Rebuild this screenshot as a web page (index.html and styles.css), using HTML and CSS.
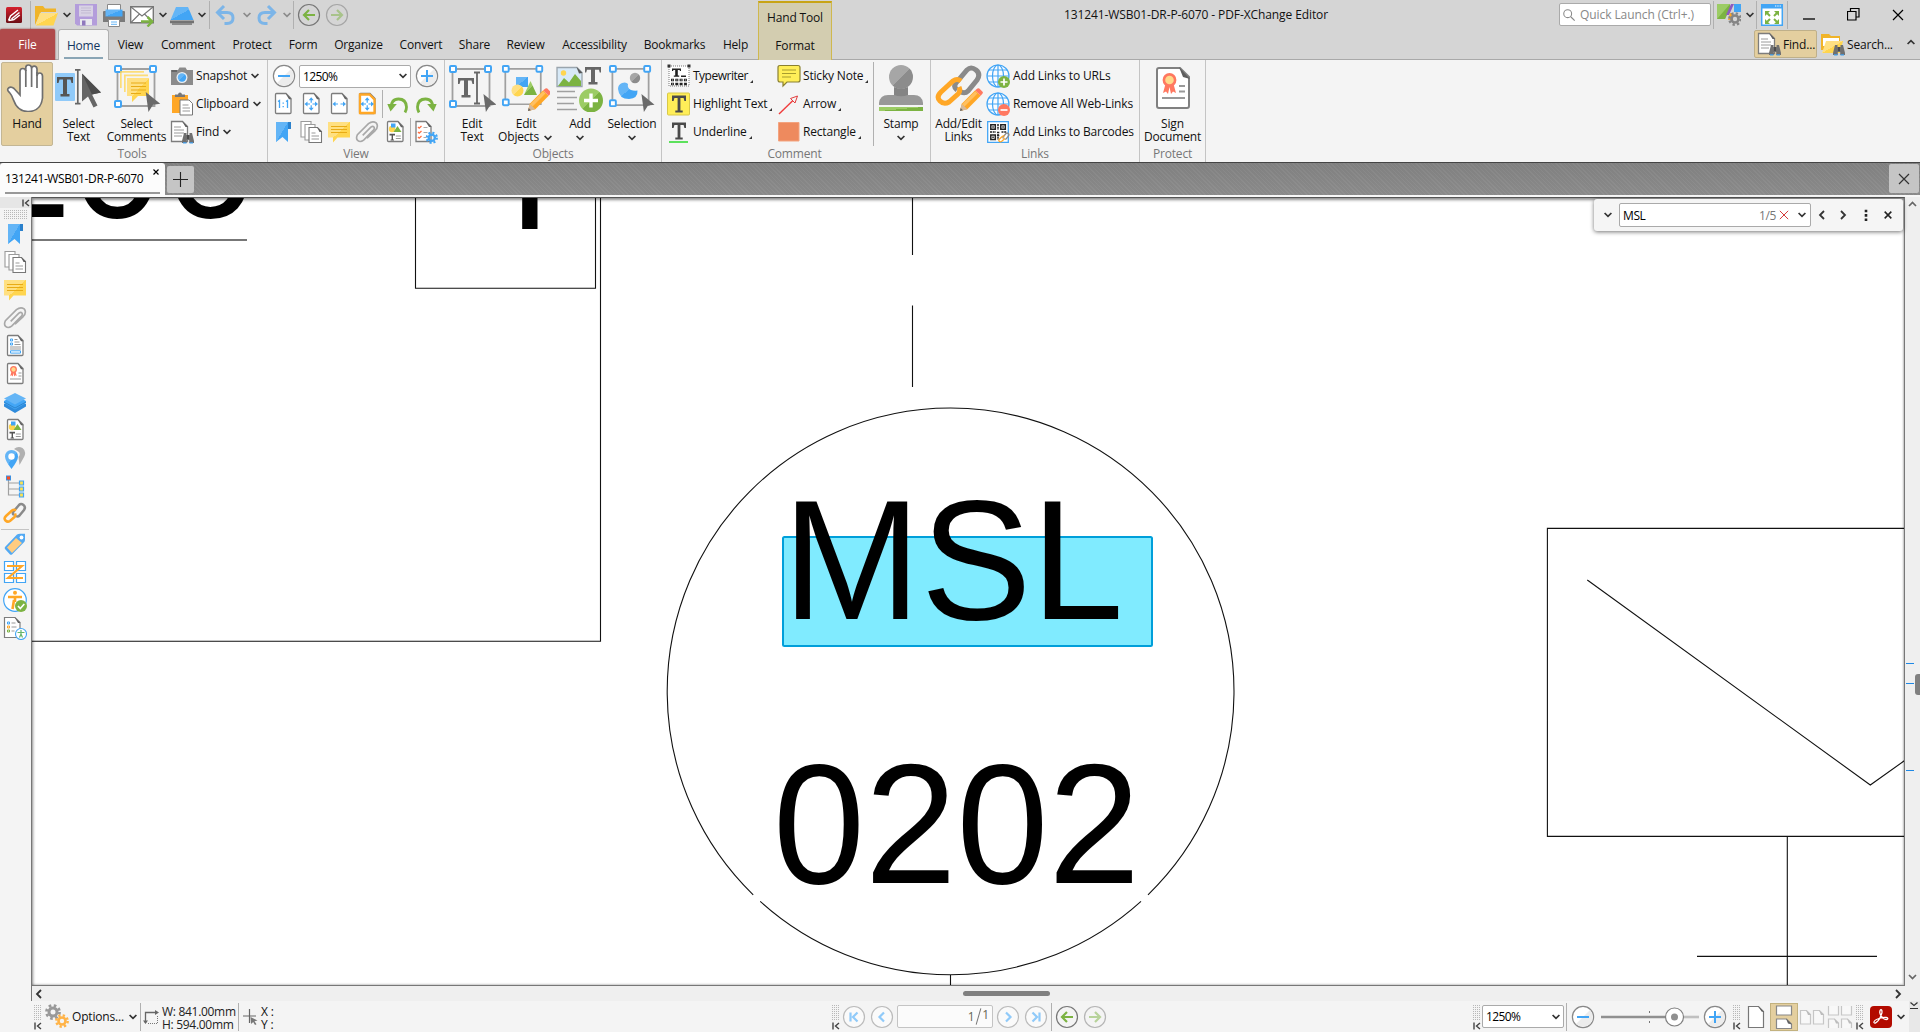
FILE: index.html
```html
<!DOCTYPE html>
<html lang="en">
<head>
<meta charset="utf-8">
<title>131241-WSB01-DR-P-6070 - PDF-XChange Editor</title>
<link rel="stylesheet" href="styles.css">
</head>
<body>
<svg class="defs" width="0" height="0" aria-hidden="true">
  <defs>
    <linearGradient id="gBlue" x1="0" y1="0" x2="1" y2="1"><stop offset=".5" stop-color="#64b5f6"/><stop offset=".5" stop-color="#42a5f5"/></linearGradient>
    <linearGradient id="gYellow" x1="0" y1="0" x2="1" y2="1"><stop offset=".5" stop-color="#ffe082"/><stop offset=".5" stop-color="#ffd54f"/></linearGradient>
    <linearGradient id="gGreen" x1="0" y1="0" x2="1" y2="1"><stop offset=".5" stop-color="#9ccc65"/><stop offset=".5" stop-color="#7cb342"/></linearGradient>
    <linearGradient id="gGray" x1="0" y1="0" x2="1" y2="1"><stop offset=".5" stop-color="#a6a6a6"/><stop offset=".5" stop-color="#8c8c8c"/></linearGradient>
    <linearGradient id="gRed" x1="0" y1="0" x2="0" y2="1"><stop offset="0" stop-color="#d5202c"/><stop offset="1" stop-color="#6c0d15"/></linearGradient>
  </defs>
  <symbol id="chev" viewBox="0 0 12 12"><path d="M2.600 4l3.400 3.400L9.400 4" fill="none" stroke="currentColor" stroke-width="1.700"/></symbol>
  <symbol id="chevL" viewBox="0 0 12 12"><path d="M8 2L4 6l4 4" fill="none" stroke="currentColor" stroke-width="1.800"/></symbol>
  <symbol id="chevR" viewBox="0 0 12 12"><path d="M4 2l4 4-4 4" fill="none" stroke="currentColor" stroke-width="1.800"/></symbol>
  <symbol id="cross" viewBox="0 0 12 12"><path d="M1 1l10 10M11 1L1 11" fill="none" stroke="currentColor" stroke-width="1.200"/></symbol>
  <symbol id="crossB" viewBox="0 0 12 12"><path d="M1 1l10 10M11 1L1 11" fill="none" stroke="currentColor" stroke-width="2.300"/></symbol>
  <symbol id="collapse" viewBox="0 0 8 8"><path d="M1 .5v7M7 1L3.500 4 7 7" fill="none" stroke="#444" stroke-width="1.400"/></symbol>
  <symbol id="page" viewBox="0 0 24 24"><path d="M4.500 2.500q0-1 1-1H15l5 5v14q0 1-1 1H5.500q-1 0-1-1z" fill="#fff" stroke="#7d7d7d" stroke-width="1.300"/><path d="M14.500 1.200l6 6h-2.500z" fill="#5d5d5d"/></symbol>
  <symbol id="binoc" viewBox="0 0 12 12"><path d="M2 1h2.500v2h3V1H10l2 8v2H7.200V8H4.800v3H0V9z" fill="#707070"/><path d="M1 10.200h3.500v1.300H1zM7.500 10.200H11v1.300H7.500z" fill="#3f9ff0"/><path d="M5 3h2v4H5z" fill="#4b4b4b"/></symbol>
  <symbol id="logo" viewBox="0 0 16 16"><rect width="16" height="16" rx="1.500" fill="url(#gRed)"/><path d="M2.500 13.500l2-4.500L12 3M5.500 12L13.500 5.500M7.500 13L13.800 8M2.500 13.500l5-.8" fill="none" stroke="#fff" stroke-width="1.500"/></symbol>
  <symbol id="folder" viewBox="0 0 24 24"><path d="M0 3h8l2 2.500h11V9H6L0 22z" fill="#f0b429"/><path d="M5 10h18l-4.500 12.500H.5z" fill="url(#gYellow)"/></symbol>
  <symbol id="save" viewBox="0 0 24 24"><path d="M0 1h22v21.500H2L0 20.500z" fill="#b39ddb"/><path d="M4 2.500h14v11H4z" fill="#d8d2e4"/><path d="M6 5h10M6 7.500h10M6 10h10" stroke="#c3bbd3"/><path d="M5 16h12v6H5z" fill="#e8e8ee"/><path d="M7 17.500h3.500v5H7z" fill="#8f78bd"/></symbol>
  <symbol id="printer" viewBox="0 0 24 24"><path d="M5.500 1.500h13v6h-13z" fill="#fff" stroke="#888"/><path d="M1 9q0-1 1-1h20q1 0 1 1v10H1z" fill="#7b7b7b"/><path d="M3.500 6.500h17v7h-17z" fill="url(#gBlue)"/><path d="M6.500 16.500h11v7h-11z" fill="#fff" stroke="#888"/><path d="M9 19h6M9 21.300h6" stroke="#64b5f6"/></symbol>
  <symbol id="mail" viewBox="0 0 24 24"><path d="M.7 3.700h22.600v16H.7z" fill="#fff" stroke="#777" stroke-width="1.400"/><path d="M1 4l11 9L23 4M1 19.500l8.500-8.500M23 19.500L14.500 11" fill="none" stroke="#777" stroke-width="1.100"/><path d="M11 18.500h10M17.500 14l4.800 4.500-4.800 5" fill="none" stroke="#7cb342" stroke-width="2.400"/></symbol>
  <symbol id="scanner" viewBox="0 0 24 24"><path d="M6 4h12l5.500 13H.5z" fill="url(#gBlue)"/><path d="M0 17.500h24v2.800H0zM2 20.500h20v1.200H2z" fill="#737373"/></symbol>
  <symbol id="undo" viewBox="0 0 24 24"><path d="M4 9.500h9q6 0 6 5.500t-6 5.500h-2.500" fill="none" stroke="#7cb5e8" stroke-width="3"/><path d="M10 3L3.500 9.500 10 16" fill="none" stroke="#7cb5e8" stroke-width="3"/></symbol>
  <symbol id="circ" viewBox="0 0 24 24"><circle cx="12" cy="12" r="10.500" fill="#fcfcfc" fill-opacity=".7" stroke="currentColor" stroke-width="1.200"/></symbol>
  <symbol id="back" viewBox="0 0 24 24"><circle cx="12" cy="12" r="10.500" fill="none" stroke="#777" stroke-width="1.200"/><path d="M18 12H7.500M12 7l-5 5 5 5" fill="none" stroke="#7cb342" stroke-width="2.200"/></symbol>
  <symbol id="hand" viewBox="0 0 48 48"><path d="M17 31L11 24.500Q8 22 5.500 24q-2 2 1 4.500 2 2 4 7.500 4 11.500 14.500 11.500Q38 47.500 39.500 34V12q-.3-3-2.700-3-2.600 0-2.800 3V5q-.3-2.800-2.700-2.800-2.600 0-2.800 2.800V3.500Q28 1 25.500 1 22.800 1 22.800 3.500V7q-.3-2.500-3-2.500Q17 4.500 17 7.500z" fill="#fff" stroke="#6f6f6f" stroke-width="1.700"/><path d="M22.800 6v17M28.600 5v18M34 8v16" stroke="#6f6f6f" stroke-width="1.700"/></symbol>
  <symbol id="cursor" viewBox="0 0 20 35"><path d="M0 0l19 19-9 2 5.500 11-4 2L6 23l-6 5z" fill="#666"/><path d="M0 0l19 19-9 2z" fill="#4d4d4d"/></symbol>
  <symbol id="selText" viewBox="0 0 48 48"><rect x="0" y="9" width="20" height="28" rx="1" fill="#90caf9"/><path d="M2 13h16v6h-1.500l-1-3.500H12V30h2.500v2.500h-9V30H8V15.500H4.500l-1 3.500H2z" fill="#555"/><path d="M20 5.800h5.500M20 39.700h5.500M22.800 6v33.500" fill="none" stroke="#666" stroke-width="1.700"/><use href="#cursor" x="27" y="9.500" width="20" height="35"/></symbol>
  <symbol id="nodes" viewBox="0 0 48 48"><path d="M4.500 5h37v37h-37z" fill="none" stroke="#a0a0a0" stroke-width="1.800"/><g fill="#fff" stroke="#42a5f5" stroke-width="2"><rect x="2" y="2" width="6" height="6" rx="1"/><rect x="37" y="2" width="6" height="6" rx="1"/><rect x="2" y="37" width="6" height="6" rx="1"/></g></symbol>
  <symbol id="pointer" viewBox="0 0 18 22"><path d="M1 0l16 13-8 1-5 8z" fill="#6a6a6a"/></symbol>
  <symbol id="note" viewBox="0 0 24 24"><path d="M1 2h22v15.500H10.500L6 22.500v-5H1z" fill="url(#gYellow)"/><path d="M4 6.500h16M4 9.500h16M4 12.500h16" stroke="#e8ab16" stroke-width="1.100"/></symbol>
  <symbol id="selComm" viewBox="0 0 48 48"><use href="#nodes" width="48" height="48"/><g fill="#ffd54f" opacity=".75"><path d="M7 7h24v1.700H8.700V24H7zM11 10.500h24v1.700H12.700V28H11z"/></g><path d="M14 14h22v18H25l-6 6v-6h-5z" fill="url(#gYellow)"/><path d="M18 19h15M18 22.500h15M18 26h15M18 29.500h10" stroke="#e8ab16"/><use href="#pointer" x="31" y="28" width="18" height="20"/></symbol>
  <symbol id="camera" viewBox="0 0 24 24"><path d="M1 6h7l1.500-2.500h6L17 6h6v15H1z" fill="#8b8b8b"/><path d="M1.500 6H7v2H1.500z" fill="#666"/><circle cx="12" cy="13.500" r="5.500" fill="#e9eef3"/><circle cx="12" cy="13.500" r="4.200" fill="url(#gBlue)"/></symbol>
  <symbol id="clip" viewBox="0 0 24 24"><path d="M2 3h16v18H2z" fill="#ffa726"/><path d="M5 5V2.500h3q.3-2 2-2t2 2h3V5z" fill="#777"/><path d="M10 8h9l3.500 3.500V23H10z" fill="#fff" stroke="#777"/><path d="M12.500 13h6M12.500 16h7.500M12.500 19h7.500" stroke="#999"/></symbol>
  <symbol id="find" viewBox="0 0 24 24"><path d="M1.500 1.500h11l5 5v15h-16z" fill="#fff" stroke="#7d7d7d" stroke-width="1.300"/><path d="M12 1l6 6h-2.500z" fill="#5d5d5d"/><path d="M4 7h7M4 10h10M4 13h10M4 16h8" stroke="#9a9a9a"/><use href="#binoc" x="12" y="12" width="12" height="12"/></symbol>
  <symbol id="zout" viewBox="0 0 24 24"><circle cx="12" cy="12" r="10.600" fill="#fff" stroke="#888" stroke-width="1.200"/><path d="M19 5A9.900 9.900 0 0 1 5 19z" fill="#ececec"/><path d="M6 12h12" stroke="#42a5f5" stroke-width="2"/></symbol>
  <symbol id="zin" viewBox="0 0 24 24"><use href="#zout"/><path d="M12 6v12M6 12h12" stroke="#42a5f5" stroke-width="2"/></symbol>
  <symbol id="p11" viewBox="0 0 24 24"><use href="#page"/><path d="M7 9.500l1.500-1V16M15 9.500l1.500-1V16M12.200 10.500v1.200M12.200 14v1.200" fill="none" stroke="#42a5f5" stroke-width="1.300"/></symbol>
  <symbol id="arrH" viewBox="0 0 24 24"><path d="M7 12h4M13.500 12h4" stroke="#42a5f5" stroke-width="1.200"/><path d="M5.500 12l3-2.500v5zM19 12l-3-2.500v5z" fill="#42a5f5"/></symbol>
  <symbol id="fitW" viewBox="0 0 24 24"><use href="#page"/><use href="#arrH"/></symbol>
  <symbol id="arr4" viewBox="0 0 24 24"><use href="#arrH"/><use href="#arrH" transform="rotate(90 12.200 12)"/></symbol>
  <symbol id="fitP" viewBox="0 0 24 24"><use href="#page"/><use href="#arr4"/></symbol>
  <symbol id="fitV" viewBox="0 0 24 24"><use href="#page"/><path d="M5 2.500h9.500l5 5V21H5z" fill="none" stroke="#ffa726" stroke-width="2.300"/><use href="#arr4"/></symbol>
  <symbol id="rotL" viewBox="0 0 24 24"><path d="M5 16q0-9 7.500-9t8 8q0 3-1.500 5.500" fill="none" stroke="#7cb342" stroke-width="2.800"/><path d="M.8 12h9.500L4 19.500z" fill="#7cb342" transform="translate(.5 0)"/></symbol>
  <symbol id="bookmark" viewBox="0 0 24 24"><path d="M5 2h12v20l-5.500-5L5 22z" fill="url(#gBlue)"/><path d="M17 2h3v7h-3z" fill="#2b81cc"/></symbol>
  <symbol id="pages" viewBox="0 0 24 24"><g fill="#fff" stroke="#9a9a9a" stroke-width="1.100"><path d="M2 1.500h10V17H2z"/><path d="M6 4.500h10V20H6z"/><path d="M10 7.500h8.500l4 4v11H10z" stroke="#777"/></g><path d="M18 7l5 5h-2.500z" fill="#5d5d5d"/><path d="M12.500 13h4M12.500 16h7.500M12.500 19h7.500" stroke="#999"/></symbol>
  <symbol id="paper" viewBox="0 0 24 24"><path d="M7.500 15.500L16 7q2-1.500 3.200-.2 1 1.500-.5 3.200L8.500 20.500Q5 23 2.500 21t-.5-6.200L13.500 3.300Q17.800 0 21.500 2.500 24.500 6 20.500 10.500L12 18.500" fill="none" stroke="#a8a8a8" stroke-width="1.700" transform="translate(.5 .5) scale(.96)"/></symbol>
  <symbol id="content" viewBox="0 0 24 24"><use href="#page"/><circle cx="9" cy="9" r="3.200" fill="#ffd54f"/><path d="M8 3.500h4.500v4H8z" fill="#42a5f5"/><path d="M10.500 12l4-6 4 6z" fill="#7cb342"/><path d="M6.500 13.800h5.500v1.700H6.500zM8.600 14h1.400v6.500H8.600zM7.600 19.500H11v1H7.600z" fill="#555"/><path d="M12.800 16h5M12.800 18.500h5" stroke="#999"/></symbol>
  <symbol id="gear" viewBox="0 0 16 16"><circle cx="8" cy="8" r="4" fill="none" stroke="currentColor" stroke-width="3"/><circle cx="8" cy="8" r="6.500" fill="none" stroke="currentColor" stroke-width="2.800" stroke-dasharray="2.600 2.505"/></symbol>
  <symbol id="viewset" viewBox="0 0 24 24"><path d="M2 1.500h10l5 5v15H2z" fill="#fff" stroke="#7d7d7d" stroke-width="1.300"/><path d="M11.500 1l6 6H15z" fill="#5d5d5d"/><path d="M4 7l1.200 1.200L7.500 6M4 12l1.200 1.200L7.500 11M4 17l1.200 1.200L7.500 16" fill="none" stroke="#ff7043" stroke-width="1.300"/><path d="M9.500 7.500h4M9.500 12.500h4M9.500 17.500h3" stroke="#aaa"/><use href="#gear" x="11.500" y="11.500" width="12.500" height="12.500" color="#42a5f5"/></symbol>
  <symbol id="editText" viewBox="0 0 48 48"><use href="#nodes"/><path d="M10 14h16v6h-1.500l-1-3.500H20V31h2.500v2.500h-9V31H16V16.500h-3.500l-1 3.500H10z" fill="#666"/><path d="M26 8.500h6M26 39.500h6M29 8.500v31" stroke="#666" stroke-width="1.800"/><use href="#pointer" x="33" y="30" width="18" height="18"/></symbol>
  <symbol id="pencil" viewBox="0 0 26 26"><path d="M1 25l2-8L17.500 2.500l6 6L9 23z" fill="#ffa726"/><path d="M17.500 2.500L20 .6q1-.8 2 0L25.500 4q.8 1 0 2l-2 2.500z" fill="#ff7860"/><path d="M3 17l6 6-8 2z" fill="#d6b99a"/><path d="M3.500 17.500l14-14 2.500 2.500L6 20z" fill="#ffc061"/><path d="M1 25l.8-3.200L4.300 24z" fill="#666"/></symbol>
  <symbol id="editObj" viewBox="0 0 48 48"><g transform="translate(-1 0)"><use href="#nodes" width="46" height="46"/></g><path d="M14 13h12v10H14z" fill="url(#gBlue)"/><circle cx="15.500" cy="26.500" r="6" fill="url(#gYellow)"/><path d="M22 31l6.500-14L35 31z" fill="url(#gGreen)"/><use href="#pencil" x="25" y="24" width="24" height="24"/></symbol>
  <symbol id="add" viewBox="0 0 48 48"><path d="M1 3.500h20l5 5v14H1z" fill="#d7e9f7" stroke="#9aa5ad" stroke-width="1.300"/><path d="M20.500 3l6 6-3.500.5z" fill="#555"/><circle cx="7.500" cy="9" r="2.700" fill="#ffd54f"/><path d="M2 22l6-8 5 4.500L19 10l6 7v5z" fill="#7cb342"/><path d="M29 3h16v5.500h-1.300L43 5.700h-4V18h2.500v2.500h-9V18H35V5.700h-4l-.8 2.800H29z" fill="#666"/><path d="M1 27.500h18M1 33.500h20M1 39.500h17M1 45.500h20" stroke="#a0a0a0" stroke-width="1.700"/><circle cx="35" cy="36.500" r="12" fill="url(#gGreen)"/><path d="M35 29.500v14M28 36.500h14" stroke="#fff" stroke-width="3.400"/></symbol>
  <symbol id="selection" viewBox="0 0 48 48"><use href="#nodes" width="47" height="47"/><circle cx="27" cy="14" r="5.200" fill="url(#gGray)"/><path d="M10 25q0-4.500 4-6t6 1q-1 4 3 6 3 1 6.500.5.500 8-8.500 8.500-10 0-11-10z" fill="url(#gBlue)"/><use href="#pointer" x="31" y="30" width="18" height="18"/></symbol>
  <symbol id="typew" viewBox="0 0 24 24"><path d="M2 2h20v20H2z" fill="#fff" stroke="#777" stroke-dasharray="1 1"/><path d="M.5.500h3v3h-3zM20.500.5h3v3h-3z" fill="#333"/><path d="M5 4.500h9V7h-1.200V6h-2v5.500h1.400v1.200H6.800v-1.200h1.400V6h-2v1H5zM14 11.500h5v1.500h-5z" fill="#222"/><path d="M4 16h16M4 20h16" stroke="#222" stroke-width="2.600" stroke-dasharray="3 1.300"/><path d="M5 16h14M5 20h3M16 20h3" stroke="#fff" stroke-width=".8" stroke-dasharray="1.200 3.100"/></symbol>
  <symbol id="Tglyph" viewBox="0 0 24 24"><path d="M5 3.500h14v5.500h-1.600l-.8-3H13.400V18.500h2.300v2H8.300v-2h2.300V6H7.400l-.8 3H5z" fill="#4a4a4a"/></symbol>
  <symbol id="hilite" viewBox="0 0 24 24"><rect x=".5" y="1" width="22" height="22" rx="1" fill="#ffee58" stroke="#d8c84a"/><use href="#Tglyph"/></symbol>
  <symbol id="under" viewBox="0 0 24 24"><use href="#Tglyph" y="-1"/><path d="M2 22h19" stroke="#1ad81a" stroke-width="1.400"/></symbol>
  <symbol id="sticky" viewBox="0 0 24 24"><path d="M3 1.500h18q2 0 2 2V16q0 2-2 2H10l-4 4v-4H3q-2 0-2-2V3.500q0-2 2-2z" fill="#ffee58" stroke="#8a8030" stroke-width="1.200"/><path d="M5 6h14M5 9.500h14M5 13h9" stroke="#a89c2e" stroke-width="1.200"/></symbol>
  <symbol id="arrow" viewBox="0 0 24 24"><path d="M2 22L18 6.500" stroke="#f03b3b" stroke-width="1.400"/><path d="M20.500 4l-7 2.500 4.500 4.500z" fill="#f4f4f4" stroke="#e23b3b" stroke-width="1"/></symbol>
  <symbol id="rect" viewBox="0 0 24 24"><path d="M1.500 2.500h20.500v18.500H1.500z" fill="#ee8a5e" stroke="#f3a37f"/></symbol>
  <symbol id="stamp" viewBox="0 0 48 48"><circle cx="24" cy="13" r="12" fill="url(#gGray)"/><path d="M17 23q7 3.500 14 0v11H17z" fill="#848484"/><path d="M2 41v-2q1-8 9-8h6q7 2.500 14 0h6q8 0 9 8v2z" fill="#989898"/><path d="M2 43h44v4H2z" fill="url(#gGreen)"/></symbol>
  <symbol id="link" viewBox="0 0 48 48"><g fill="none" stroke-width="5" stroke-linecap="butt"><path d="M22 26q-4-3-1-7L32 6q4-4 9 0t1 10L33 27q-3 3-7 1" stroke="#8a8a8a"/><path d="M26 17q-4-3-8 0L6 28q-5 5-1 9t9 1l9-8q3-3 1-7" stroke="#ffa726"/></g></symbol>
  <symbol id="linkEdit" viewBox="0 0 48 48"><use href="#link"/><use href="#pencil" x="24" y="24" width="24" height="24"/></symbol>
  <symbol id="globe" viewBox="0 0 24 24"><g fill="none" stroke="#42a5f5" stroke-width="1.200"><circle cx="12" cy="12" r="11" fill="#fafcff"/><ellipse cx="12" cy="12" rx="5.500" ry="11"/><path d="M12 1v22M1 12h22M3 6h18M3 18h18"/></g></symbol>
  <symbol id="globeAdd" viewBox="0 0 24 24"><use href="#globe"/><circle cx="18" cy="18" r="6" fill="#7cb342"/><path d="M18 14.500v7M14.500 18h7" stroke="#fff" stroke-width="1.700"/></symbol>
  <symbol id="globeDel" viewBox="0 0 24 24"><use href="#globe"/><circle cx="18" cy="18" r="6" fill="#ff7860"/><path d="M14.500 18h7" stroke="#fff" stroke-width="1.700"/></symbol>
  <symbol id="barcode" viewBox="0 0 24 24"><path d="M1.700 1.700h20.600v20.600H1.700z" fill="#fff" stroke="#42a5f5" stroke-width="1.300"/><g fill="none" stroke="#222" stroke-width="1.500"><path d="M4.800 4.800h4.500v4.500H4.800zM14.800 4.800h4.500v4.500h-4.500zM4.800 15h4.500v4.500H4.800z"/><path d="M12 4v6M4 12h6M11 12.500h3M15.500 12h5M12 14v6M11 15.500h3" stroke-dasharray="2 .7"/></g><path d="M6.300 6.300h1.500v1.500H6.300zM16.300 6.300h1.500v1.500h-1.500zM6.300 16.500h1.500V18H6.300z" fill="#222"/><use href="#link" x="12" y="12" width="12" height="12"/></symbol>
  <symbol id="rosette" viewBox="0 0 16 24"><path d="M4 12L1.500 21l3-1.500L6.500 22 8 15l1.500 7 2-2.500 3 1.500L12 12z" fill="#ff7860"/><circle cx="8" cy="8" r="5.600" fill="#ffd98a" stroke="#ff7860" stroke-width="2.600"/></symbol>
  <symbol id="sign" viewBox="0 0 48 48"><path d="M8 6q0-2 2-2h21l9 9v29q0 2-2 2H10q-2 0-2-2z" fill="#fff" stroke="#808080" stroke-width="2"/><path d="M30 3l11 12-7-2z" fill="#5d5d5d"/><use href="#rosette" x="12" y="8" width="17" height="24"/><path d="M30 22h6M30 27.500h6M13 34h23" stroke="#999" stroke-width="1.800"/></symbol>
  <symbol id="lens" viewBox="0 0 16 16"><circle cx="6.500" cy="6.500" r="4.500" fill="none" stroke="#888" stroke-width="1.200"/><path d="M10 10l4.500 4.500" stroke="#888" stroke-width="1.300"/></symbol>
  <symbol id="uiopt" viewBox="0 0 24 24"><path d="M0 1h13L8 16H0z" fill="#9ccc65"/><path d="M0 16L13 1v5L8 16z" fill="#7cb342"/><path d="M14 1h3l-5 11h-3z" fill="#8e5bc0"/><path d="M17 1h7v8h-7z" fill="#42a5f5"/><path d="M13 10h3v7h-5z" fill="#ffa726"/><use href="#gear" x="11" y="9" width="14" height="14" color="#858585"/></symbol>
  <symbol id="full" viewBox="0 0 24 24"><path d="M1.700 1.700h20.600v20.600H1.700z" fill="#fff" stroke="#42a5f5" stroke-width="1.500"/><path d="M1 1h22v4.500H1z" fill="#42a5f5"/><path d="M15 3h6" stroke="#fff" stroke-dasharray="1.300 1"/><path d="M5 8h5L5 13zM19 8h-5l5 5zM5 21h5l-5-5zM19 21h-5l5-5z" fill="#7cb342"/><path d="M6 9l4 4M18 9l-4 4M6 20l4-4M18 20l-4-4" stroke="#7cb342" stroke-width="2"/></symbol>
  <symbol id="searchF" viewBox="0 0 24 24"><path d="M0 2h8l2 2h9v14H0z" fill="#f0b429"/><path d="M2 6h16v8H2z" fill="#fff"/><path d="M5 9h17l-3 12H1z" fill="url(#gYellow)"/><use href="#binoc" x="12" y="12" width="12" height="12"/></symbol>
  <symbol id="fields" viewBox="0 0 24 24"><use href="#page"/><path d="M7.500 5h2v2h-2zM7.500 9h2v2h-2zM7.500 16.800h10v2.300h-10z" fill="none" stroke="#42a5f5"/><path d="M11.500 5.500h3M11.500 8h5M11.500 10.500h6M7 13h11M7 15h11" stroke="#999"/></symbol>
  <symbol id="signs" viewBox="0 0 24 24"><use href="#page"/><use href="#rosette" x="6.500" y="3.500" width="8" height="12"/><path d="M15.500 11h3M15.500 14h3M7 17h11" stroke="#999"/></symbol>
  <symbol id="layers" viewBox="0 0 24 24"><path d="M1 14l11-6 11 6v2.500L12 23 1 16.500z" fill="#2f8bdb"/><path d="M1 11l11-6 11 6v2L12 19.500 1 13z" fill="#42a5f5"/><path d="M1 8.500L12 3l11 5.500-11 6z" fill="#64b5f6"/><path d="M1 12l11 6 11-6" fill="none" stroke="#2478bf" stroke-width=".7"/></symbol>
  <symbol id="dest" viewBox="0 0 24 24"><path d="M11 3q4-3.500 8.500-1 4 3 2 8-1.500 3-5 9l-1-8q3-4-1-6z" fill="#b0b0b0"/><path d="M8.500 23Q2 14.500 2 10.500 2.500 4 8.500 4T15 10.500Q15 14.500 8.500 23z" fill="url(#gBlue)"/><circle cx="8.500" cy="10.500" r="3.200" fill="#fff"/></symbol>
  <symbol id="tree" viewBox="0 0 24 24"><path d="M5.500 4v17H18M5.500 9H18M5.500 15H18" fill="none" stroke="#a0a0a0" stroke-width="1.200"/><rect x="3.500" y="2" width="4" height="4" fill="#ff4f1f" stroke="#3c8fe0"/><g fill="#ffe14d" stroke="#42a5f5" stroke-width="1.200"><path d="M16.500 7h4v4h-4zM16.500 13h4v4h-4zM16.500 19h4v4h-4z"/></g></symbol>
  <symbol id="tag" viewBox="0 0 24 24"><path d="M2 15L14 2.500q1-.7 3-.7h5v6q0 1.500-1 2.500L9 22.500q-1 .7-2 0L2 17q-.7-1 0-2z" fill="#52a9f3"/><path d="M4 15.500L13 6l6 5-10 10z" fill="#ffcc80"/><circle cx="18.500" cy="5.500" r="1.900" fill="#fff"/></symbol>
  <symbol id="order" viewBox="0 0 24 24"><path d="M1.500 1.500h9v9h-9zM13.500 1.500h9v9h-9zM1.500 13.500h9v9h-9zM13.500 13.500h9v9h-9z" fill="#fff" stroke="#42a5f5" stroke-width="1.200"/><path d="M4 6h15L5 18h15" fill="none" stroke="#ffa726" stroke-width="2.100"/></symbol>
  <symbol id="access" viewBox="0 0 24 24"><circle cx="12" cy="12" r="11.300" fill="#fff" stroke="#42a5f5" stroke-width="1.200"/><circle cx="12" cy="4.800" r="2" fill="#ffa726"/><path d="M5 9h14M12 9v5M11 12l-1.500 9" stroke="#ffa726" stroke-width="2.600" fill="none"/><circle cx="18" cy="18" r="6" fill="#7cb342"/><path d="M15 18l2.300 2.500 4-4.500" stroke="#fff" stroke-width="1.600" fill="none"/></symbol>
  <symbol id="accrep" viewBox="0 0 24 24"><path d="M1.500 1.500h10.500l5 5v15H1.500z" fill="#fff" stroke="#7d7d7d" stroke-width="1.200"/><path d="M11.500 1l6 6H15z" fill="#5d5d5d"/><path d="M4.500 6h2v2h-2z" fill="none" stroke="#42a5f5"/><path d="M4.500 10h2v2h-2z" fill="none" stroke="#ffa726"/><path d="M4.500 14h2v2h-2z" fill="none" stroke="#7cb342"/><path d="M8.500 7h4M8.500 11h5M8.500 15h3" stroke="#999"/><circle cx="18" cy="18" r="5.500" fill="#fff" stroke="#42a5f5" stroke-width="1.100"/><path d="M14.500 16.500h7M18 14v4.500M18 18l-1.500 3.500M18 18l1.500 3.500" stroke="#66b56a" stroke-width="1.200"/></symbol>
  <symbol id="dim" viewBox="0 0 18 18"><path d="M2.500 15V4.500H13" fill="none" stroke="#666" stroke-width="1.300"/><path d="M12 2l4 2.500L12 7zM0 12.500h5L2.500 16z" fill="#666"/><path d="M5 15.500h9.500V7" fill="none" stroke="#777" stroke-dasharray="1 1"/></symbol>
  <symbol id="xy" viewBox="0 0 18 18"><path d="M7.500 1v14M1 8h13" stroke="#666" stroke-width="1.200"/><path d="M8.500 9l7 3.500-3 .7 2 3-1.500.8-1.800-3-2.200 2z" fill="#777"/></symbol>
  <symbol id="first" viewBox="0 0 24 24"><use href="#circ" color="#bbb"/><path d="M8.500 7.500v9M15.500 7.500L11 12l4.500 4.500" fill="none" stroke="#90caf9" stroke-width="2.200"/></symbol>
  <symbol id="prev" viewBox="0 0 24 24"><use href="#circ" color="#bbb"/><path d="M14 7.500L9.500 12l4.500 4.500" fill="none" stroke="#90caf9" stroke-width="2.200"/></symbol>
  <symbol id="pg1" viewBox="0 0 18 24"><path d="M1.500 1.500h10l5 5v16h-15z" fill="#fff" stroke="#777" stroke-width="1.200"/><path d="M11 1l6 6-2.500-.5z" fill="#5d5d5d"/></symbol>
  <symbol id="pgc" viewBox="0 0 18 24"><path d="M1.500 1v9h15V1zM1.500 23.500V14h10l5 5v4.500z" fill="#fff" stroke="#888" stroke-width="1.200"/><path d="M11 13.500l6 6-4-1z" fill="#5d5d5d"/></symbol>
  <symbol id="pg2" viewBox="0 0 26 24"><g fill="#f8f8f8" stroke="#c6c6c6" stroke-width="1.200"><path d="M1.500 5.500h6l4 4v9.500h-10zM14.500 5.500h6l4 4v9.500h-10z"/></g><path d="M7 5l5 5H9zM20 5l5 5h-3z" fill="#bbb"/></symbol>
  <symbol id="pg4" viewBox="0 0 26 24"><g fill="#f8f8f8" stroke="#c6c6c6" stroke-width="1.200"><path d="M1.500 1v9h10V1M14.500 1v9h10V1M1.500 23v-9h6l4 4v5M14.500 23v-9h6l4 4v5"/></g><path d="M7 13.500l5 5H9zM20 13.500l5 5h-3z" fill="#bbb"/></symbol>
  <symbol id="pdf" viewBox="0 0 24 24"><rect x="1" y="1" width="22" height="22" rx="4" fill="#b30b00"/><path d="M5 17.500q-.5-2 5-4 4-1.300 7-1 2.500.5 1.500 1.700-1.800 1-4.500-1-3-3-3.200-5.500 0-3 1.200-3t.9 3.200q-1 4-3.700 7.800-3 3.500-4.200 1.800z" fill="none" stroke="#fff" stroke-width="1.300"/></symbol>
  <symbol id="tri" viewBox="0 0 4 4"><path d="M4 0v4H0z" fill="#333"/></symbol>
</svg>

<div class="app">
  <header class="top">
    <div class="titlebar">
      <div class="qat">
        <svg class="i16 m6"><use href="#logo"/></svg><i class="vsep m8"></i>
        <svg class="i24 m4"><use href="#folder"/></svg><svg class="i12 m2"><use href="#chev"/></svg>
        <svg class="i24 m2"><use href="#save"/></svg><svg class="i24 m3"><use href="#printer"/></svg>
        <svg class="i24 m4"><use href="#mail"/></svg><svg class="i12 m3"><use href="#chev"/></svg>
        <svg class="i24 m1"><use href="#scanner"/></svg><svg class="i12 m2"><use href="#chev"/></svg><i class="vsep m1"></i>
        <svg class="i24 m4"><use href="#undo"/></svg><svg class="i12 m3 dim"><use href="#chev"/></svg>
        <svg class="i24 m1 flip"><use href="#undo"/></svg><svg class="i12 m3 dim"><use href="#chev"/></svg><i class="vsep"></i>
        <svg class="i24 m3"><use href="#back"/></svg><svg class="i24 m4 flip half"><use href="#back"/></svg>
      </div>
      <div class="wintitle">131241-WSB01-DR-P-6070 - PDF-XChange Editor</div>
      <div class="winright">
        <div class="quick"><svg class="i14"><use href="#lens"/></svg><span>Quick Launch (Ctrl+.)</span></div>
        <i class="vsep m2"></i><svg class="i24 m3"><use href="#uiopt"/></svg><svg class="i12 m3"><use href="#chev"/></svg>
        <i class="vsep"></i><svg class="i24 m3"><use href="#full"/></svg><i class="vsep m3"></i>
        <div class="sys">
          <svg width="12" height="12"><path d="M0 10h12" stroke="#000" stroke-width="1.300"/></svg>
          <svg width="13" height="13"><path d="M.5 3.500h8.500v8.500H.5zM3.500 3V.5H12V9H9.500" fill="none" stroke="#000" stroke-width="1.200"/></svg>
          <svg class="i12 winx"><use href="#cross"/></svg>
        </div>
      </div>
    </div>
    <div class="tabrow">
      <nav class="tabs">
        <span class="file">File</span><span class="active">Home</span><span>View</span><span>Comment</span><span>Protect</span><span>Form</span><span>Organize</span><span>Convert</span><span>Share</span><span>Review</span><span>Accessibility</span><span>Bookmarks</span><span>Help</span><span class="ctx"><em>Hand Tool</em>Format</span>
      </nav>
      <div class="findbtns">
        <span class="findbtn on"><svg class="i24"><use href="#find"/></svg>Find...</span>
        <span class="findbtn"><svg class="i24"><use href="#searchF"/></svg>Search...</span>
        <svg class="i12 up"><use href="#chev"/></svg>
      </div>
    </div>
  </header>

  <section class="ribbon">
    <div class="group g-tools">
      <div class="body">
        <div class="big w52 on"><svg class="i48"><use href="#hand"/></svg><span>Hand</span></div>
        <div class="big w51"><svg class="i48"><use href="#selText"/></svg><span>Select<br>Text</span></div>
        <div class="big w65"><svg class="i48"><use href="#selComm"/></svg><span>Select<br>Comments</span></div>
        <div class="rows">
          <div><svg class="i24"><use href="#camera"/></svg><b>Snapshot</b><svg class="i12"><use href="#chev"/></svg></div>
          <div><svg class="i24"><use href="#clip"/></svg><b>Clipboard</b><svg class="i12"><use href="#chev"/></svg></div>
          <div><svg class="i24"><use href="#find"/></svg><b>Find</b><svg class="i12"><use href="#chev"/></svg></div>
        </div>
      </div>
      <h6>Tools</h6>
    </div>
    <div class="group g-view">
      <div class="body viewrows">
        <div><svg class="i24"><use href="#zout"/></svg><span class="combo">1250%<svg class="i12"><use href="#chev"/></svg></span><svg class="i24"><use href="#zin"/></svg></div>
        <div class="cells"><svg class="i24"><use href="#p11"/></svg><svg class="i24"><use href="#fitP"/></svg><svg class="i24"><use href="#fitW"/></svg><svg class="i24"><use href="#fitV"/></svg><i class="vsep"></i><svg class="i24"><use href="#rotL"/></svg><svg class="i24 flip"><use href="#rotL"/></svg></div>
        <div class="cells"><svg class="i24"><use href="#bookmark"/></svg><svg class="i24"><use href="#pages"/></svg><svg class="i24"><use href="#note"/></svg><svg class="i24"><use href="#paper"/></svg><svg class="i24"><use href="#content"/></svg><i class="vsep"></i><svg class="i24"><use href="#viewset"/></svg></div>
      </div>
      <h6>View</h6>
    </div>
    <div class="group g-objects">
      <div class="body">
        <div class="big w54"><svg class="i48"><use href="#editText"/></svg><span>Edit<br>Text</span></div>
        <div class="big w54"><svg class="i48"><use href="#editObj"/></svg><span>Edit<br>Objects <svg class="i12"><use href="#chev"/></svg></span></div>
        <div class="big w54"><svg class="i48"><use href="#add"/></svg><span>Add<br><svg class="i12"><use href="#chev"/></svg></span></div>
        <div class="big w50"><svg class="i48"><use href="#selection"/></svg><span>Selection<br><svg class="i12"><use href="#chev"/></svg></span></div>
      </div>
      <h6>Objects</h6>
    </div>
    <div class="group g-comment">
      <div class="body">
        <div class="rows c1">
          <div><svg class="i24"><use href="#typew"/></svg><b class="tight">Typewriter</b><svg class="tri"><use href="#tri"/></svg></div>
          <div><svg class="i24"><use href="#hilite"/></svg><b>Highlight Text</b><svg class="tri"><use href="#tri"/></svg></div>
          <div><svg class="i24"><use href="#under"/></svg><b>Underline</b><svg class="tri"><use href="#tri"/></svg></div>
        </div>
        <div class="rows c2">
          <div><svg class="i24"><use href="#sticky"/></svg><b>Sticky Note</b><svg class="tri"><use href="#tri"/></svg></div>
          <div><svg class="i24"><use href="#arrow"/></svg><b>Arrow</b><svg class="tri"><use href="#tri"/></svg></div>
          <div><svg class="i24"><use href="#rect"/></svg><b>Rectangle</b><svg class="tri"><use href="#tri"/></svg></div>
        </div>
        <i class="vsep tall"></i>
        <div class="big w54"><svg class="i48"><use href="#stamp"/></svg><span>Stamp<br><svg class="i12"><use href="#chev"/></svg></span></div>
      </div>
      <h6>Comment</h6>
    </div>
    <div class="group g-links">
      <div class="body">
        <div class="big w55"><svg class="i48"><use href="#linkEdit"/></svg><span>Add/Edit<br>Links</span></div>
        <div class="rows r-links">
          <div><svg class="i24"><use href="#globeAdd"/></svg><b>Add Links to URLs</b></div>
          <div><svg class="i24"><use href="#globeDel"/></svg><b>Remove All Web-Links</b></div>
          <div><svg class="i24"><use href="#barcode"/></svg><b>Add Links to Barcodes</b></div>
        </div>
      </div>
      <h6>Links</h6>
    </div>
    <div class="group g-protect">
      <div class="body"><div class="big w65"><svg class="i48"><use href="#sign"/></svg><span>Sign<br>Document</span></div></div>
      <h6>Protect</h6>
    </div>
  </section>

  <div class="docbar">
    <div class="doctab"><span>131241-WSB01-DR-P-6070</span><svg class="tabx"><use href="#crossB"/></svg></div>
    <div class="plus"><svg width="15" height="15"><path d="M7.500 0v15M0 7.500h15" stroke="#222" stroke-width="1.100"/></svg></div>
    <div class="closeall"><svg class="i12"><use href="#cross"/></svg></div>
  </div>

  <main class="work">
    <aside class="side">
      <div class="sidehead"><svg class="i8"><use href="#collapse"/></svg></div>
      <div class="grip wide"></div>
      <div class="sideicons">
        <svg class="i24"><use href="#bookmark"/></svg><svg class="i24"><use href="#pages"/></svg><svg class="i24"><use href="#note"/></svg><svg class="i24"><use href="#paper"/></svg><svg class="i24"><use href="#fields"/></svg><svg class="i24"><use href="#signs"/></svg><svg class="i24"><use href="#layers"/></svg><svg class="i24"><use href="#content"/></svg><svg class="i24"><use href="#dest"/></svg><svg class="i24"><use href="#tree"/></svg><svg class="i24"><use href="#link"/></svg><hr><svg class="i24"><use href="#tag"/></svg><svg class="i24"><use href="#order"/></svg><svg class="i24"><use href="#access"/></svg><svg class="i24"><use href="#accrep"/></svg>
      </div>
    </aside>
    <div class="center">
      <div class="viewport">
        <svg class="drawing" viewBox="32 197 1873 788" width="1873" height="788">
          <rect x="32" y="197" width="1873" height="788" fill="#fff"/>
          <g font-family="Liberation Sans, Arial, sans-serif" font-size="170" fill="#000">
            <rect x="783" y="537" width="369" height="109" rx="1.500" fill="#80ebff" stroke="#009fda" stroke-width="2"/>
            <text x="-20" y="216.500" textLength="274.500" lengthAdjust="spacingAndGlyphs">206</text>
            <text x="507" y="228.500" textLength="45.500" lengthAdjust="spacingAndGlyphs">I</text>
            <text x="782.500" y="618.500" textLength="341" lengthAdjust="spacingAndGlyphs">MSL</text>
            <text x="773" y="883.400" textLength="367" lengthAdjust="spacingAndGlyphs">0202</text>
          </g>
          <g fill="none" stroke="#111" stroke-width="1.100">
            <path d="M31 240h216" stroke="#777" stroke-width="2"/>
            <path d="M415.500 197v91.200h180V197M600.500 197v444.300H31"/>
            <path d="M912.500 197v58M912.500 305.500v81.500"/>
            <path d="M753.200 894.800A283.400 283.400 0 1 1 1148 894.800M1141 901.300A283.400 283.400 0 0 1 760.200 901.300M950.500 975v10"/>
            <path d="M1905 528.400h-357.600v308h357.600M1587.300 580l283 205 34.700-24.700M1787.300 836.400V985M1697 956.400h180"/>
          </g>
        </svg>
        <div class="findbar">
          <svg class="i12"><use href="#chev"/></svg>
          <div class="findinput"><span>MSL</span><em>1/5</em><svg class="redx"><use href="#cross"/></svg><svg class="i12"><use href="#chev"/></svg></div>
          <svg class="i12"><use href="#chevL"/></svg><svg class="i12"><use href="#chevR"/></svg>
          <svg class="i12 dots"><path d="M6 .7v11.500" stroke="#222" stroke-width="2.600" stroke-dasharray="2.600 1.800"/></svg>
          <svg class="fx"><use href="#crossB"/></svg>
        </div>
      </div>
      <div class="hscroll"><svg class="i12"><use href="#chevL"/></svg><div class="hthumb"></div><svg class="i12"><use href="#chevR"/></svg></div>
    </div>
    <div class="vscroll">
      <svg width="15" height="788"><path d="M4 9l3.500-3.500L11 9M4 778l3.500 3.500L11 778" fill="none" stroke="#666" stroke-width="1.700"/><path d="M1 466.500h8M1 486.500h8M1 573.500h8" stroke="#1e88e5" stroke-width="1.200"/><rect x="10" y="477" width="8" height="21" rx="3" fill="#808080"/></svg>
    </div>
  </main>

  <footer class="status">
    <div class="st-left">
      <div class="gripcol"><div class="grip"></div><svg class="i8"><use href="#collapse"/></svg></div>
      <svg class="i24"><use href="#gear" x="0" y="-1" width="16" height="16" color="#999"/><use href="#gear" x="10" y="9" width="14" height="14" color="#ffb347"/></svg>
      <span class="opt">Options...</span><svg class="i12"><use href="#chev"/></svg><i class="vsep"></i>
      <svg class="i18"><use href="#dim"/></svg><div class="wh">W: 841.00mm<br>H: 594.00mm</div><i class="vsep"></i>
      <svg class="i18 xyi"><use href="#xy"/></svg><div class="xy">X :<br>Y :</div>
    </div>
    <div class="st-mid">
      <div class="gripcol"><div class="grip"></div><svg class="i8"><use href="#collapse"/></svg></div>
      <svg class="i24"><use href="#first"/></svg><svg class="i24"><use href="#prev"/></svg>
      <div class="pagebox">1 <i></i><sup>1</sup></div>
      <svg class="i24 flip"><use href="#prev"/></svg><svg class="i24 flip"><use href="#first"/></svg><i class="vsep"></i>
      <svg class="i24"><use href="#back"/></svg><svg class="i24 flip half"><use href="#back"/></svg>
    </div>
    <div class="st-right">
      <div class="gripcol"><div class="grip"></div><svg class="i8"><use href="#collapse"/></svg></div>
      <span class="combo small">1250%<svg class="i12"><use href="#chev"/></svg></span><i class="vsep m2"></i>
      <svg class="i24 m1"><use href="#zout"/></svg>
      <svg class="slider" width="108" height="24"><path d="M6 12h64" stroke="#909090" stroke-width="2.600"/><path d="M80 12h24" stroke="#c0c0c0" stroke-width="2.600"/><path d="M54.500 6v2M54.500 16v2" stroke="#777"/><circle cx="79.500" cy="12" r="9" fill="#fff" stroke="#808080" stroke-width="1.200"/><circle cx="79.500" cy="12" r="3.500" fill="#909090"/></svg>
      <svg class="i24"><use href="#zin"/></svg>
      <div class="gripcol g2"><div class="grip"></div><svg class="i8"><use href="#collapse"/></svg></div>
      <svg class="pi one"><use href="#pg1"/></svg><div class="psel"><svg class="pi"><use href="#pgc"/></svg></div>
      <svg class="pw"><use href="#pg2"/></svg><svg class="pw p4"><use href="#pg4"/></svg>
      <div class="gripcol g3"><div class="grip"></div><svg class="i8"><use href="#collapse"/></svg></div>
      <svg class="i24 m4"><use href="#pdf"/></svg><svg class="i12 m2"><use href="#chev"/></svg>
      <div class="more"><svg width="10" height="10"><path d="M1.500 1.500l3.500 3 3.500-3M1 7.500h8" fill="none" stroke="#333" stroke-width="1.200"/></svg></div>
    </div>
  </footer>
</div>
</body>
</html>
```
FILE: styles.css
```css
* { box-sizing: border-box; }
body {
  margin: 0;
  font: 12px/13px "Open Sans", "Noto Sans", sans-serif;
  letter-spacing: -0.18px;
  color: #111;
  background: #f4f4f4;
  overflow: hidden;
}
.defs { position: absolute; }
svg { display: block; flex: none; }
.app { width: 1920px; height: 1032px; display: flex; flex-direction: column; }
.i8 { width: 8px; height: 8px; }
.i12 { width: 12px; height: 12px; color: #333; }
.i14 { width: 14px; height: 14px; }
.i16 { width: 16px; height: 16px; }
.i18 { width: 18px; height: 18px; }
.i24 { width: 24px; height: 24px; }
.i48 { width: 48px; height: 48px; overflow: visible; }
.m1 { margin-left: 1px; } .m2 { margin-left: 2px; } .m3 { margin-left: 3px; }
.m4 { margin-left: 4px; } .m6 { margin-left: 6px; } .m8 { margin-left: 8px; }
.flip { transform: scaleX(-1); }
.half { opacity: .5; }
.dim { opacity: .45; }
.vsep { width: 1px; height: 28px; background: #b0b0b0; flex: none; }

/* title bar */
.top { height: 60px; background: #d5d5d5; border-bottom: 1px solid #a9a9a9; }
.titlebar { height: 29px; display: flex; align-items: center; }
.qat { display: flex; align-items: center; width: 1064px; flex: none; }
.wintitle { width: 262px; flex: none; text-align: center; white-space: nowrap; letter-spacing: -.1px; }
.winright { display: flex; align-items: center; width: 361px; margin-left: auto; }
.quick {
  width: 152px; height: 23px; display: flex; align-items: center; gap: 4px; padding-left: 2px;
  background: #fff; border: 1px solid #aaa; border-radius: 2px; color: #888; letter-spacing: -.08px;
}
.sys { display: flex; align-items: center; margin-left: 15px; gap: 32px; }
.winx { color: #000; }

/* ribbon tabs */
.tabrow { height: 30px; display: flex; justify-content: space-between; }
.tabs {
  display: grid; height: 30px;
  grid-template-columns: 58px 51px 43px 72px 56px 46px 65px 60px 47px 55px 83px 77px 45px 74px;
}
.tabs > span { display: flex; align-items: center; justify-content: center; }
.tabs .file { background: #b04a4b; color: #fff; width: 55px; border-radius: 2px 2px 0 0; box-shadow: 0 0 2px #7a2c2c; }
.tabs .active {
  height: 31px; background: #f4f4f4; color: #12355f; border: 1px solid #b0b0b0; border-bottom: 0; border-radius: 3px 3px 0 0;
  background-image: linear-gradient(#8aa5b5, #8aa5b5); background-size: 39px 2px; background-position: 50% 27px; background-repeat: no-repeat;
}
.tabs .ctx {
  height: 59px; margin-top: -28px; flex-direction: column; justify-content: flex-start; gap: 15px; padding-top: 8px;
  background: #d3cdb0; border: 1px solid #cfb84e; border-top: 2px solid #c8a415; border-bottom: 0;
}
em { font-style: normal; }
.findbtns { display: flex; align-items: center; width: 166px; }
.findbtn { height: 28px; display: flex; align-items: center; gap: 2px; padding-left: 2px; width: 66px; }
.findbtn.on { width: 63px; background: #e4cf9f; border: 1px solid #bfb08a; border-radius: 2px; padding-left: 2px; margin-right: 2px; }
.up { transform: scaleY(-1); margin-left: 20px; margin-bottom: 4px; }

/* ribbon */
.ribbon { height: 103px; display: flex; background: #f4f4f4; border-bottom: 1px solid #444; }
.group { border-right: 1px solid #c4c4c4; display: flex; flex-direction: column; }
.g-tools { width: 268px; } .g-view { width: 177px; } .g-objects { width: 217px; }
.g-comment { width: 269px; } .g-links { width: 209px; } .g-protect { width: 66px; }
.body { height: 87px; display: flex; padding-top: 2px; }
.g-tools .body { padding-left: 1px; }
.group h6 { margin: 0; font-size: 12px; line-height: 14px; font-weight: 400; color: #777; text-align: center; }
.g-tools h6, .g-comment h6 { padding-right: 3px; }
.big { height: 84px; display: flex; flex-direction: column; align-items: center; padding-top: 2px; flex: none; }
.big.on { background: #e4cf9f; border: 1px solid #c3b694; border-radius: 2px; padding-top: 1px; }
.big span { margin-top: 5px; text-align: center; white-space: nowrap; }
.big span svg { display: inline-block; vertical-align: -3px; }
.w50 { width: 50px; } .w51 { width: 51px; } .w52 { width: 52px; } .w54 { width: 54px; } .w55 { width: 55px; } .w65 { width: 65px; }
.rows > div { height: 28px; display: flex; align-items: center; }
.rows b { font-weight: 400; margin: 0 3px 2px 2px; white-space: nowrap; }
.rows b.tight { letter-spacing: -.5px; }
.rows .i12 { margin: 0 0 1px -1px; }
.g-tools .rows { margin-left: 1px; }
.tri { width: 3px; height: 3px; align-self: flex-end; margin-bottom: 7px; margin-left: -1px; }
.c1 { width: 110px; margin-left: 5px; }
.c2 { width: 96px; }
.vsep.tall { height: 84px; }
.r-links b { margin-left: 3px; letter-spacing: -.14px; }
.viewrows { flex-direction: column; }
.viewrows > div { height: 28px; display: flex; align-items: center; padding-left: 4px; }
.viewrows .cells { padding-left: 3px; }
.viewrows .cells svg { margin-right: 4px; }
.viewrows .cells .vsep { margin: 0 3px 0 -1px; }
.combo {
  width: 112px; height: 23px; margin: 0 4px 0 3px; padding: 0 1px 0 3px; display: flex; align-items: center; justify-content: space-between;
  background: #fff; border: 1px solid #aaa; border-radius: 2px; color: #000; letter-spacing: -.6px;
}
.combo.small { width: 82px; margin: 0; }

/* document tabs */
.docbar {
  height: 34px; display: flex; align-items: flex-start; border-bottom: 2px solid #f8f8f8;
  background: repeating-linear-gradient(45deg, rgba(255,255,255,.05) 0 1px, transparent 1px 3px), linear-gradient(#808080, #8a8a8a);
}
.doctab {
  width: 165px; height: 34px; background: #fcfcfc; border-radius: 3px 3px 0 0; display: flex; align-items: flex-start; padding: 9px 5px 0;
  background-image: linear-gradient(#999, #999); background-size: 155px 2px; background-position: 5px 29px; background-repeat: no-repeat;
}
.doctab span { width: 148px; white-space: nowrap; color: #000; letter-spacing: -.38px; }
.tabx { width: 6px; height: 6px; overflow: visible; margin-top: -3px; color: #000; }
.plus, .closeall { display: flex; align-items: center; justify-content: center; background: #c5c5c5; border-radius: 2px; }
.plus { width: 27px; height: 27px; margin: 3px 0 0 2px; }
.closeall { width: 30px; height: 29px; margin: 1px 1px 0 auto; }

/* work area */
.work { height: 804px; display: flex; }
.side { width: 32px; background: #f4f4f4; border-right: 1px solid #777; }
.sidehead { height: 11px; background: #e6e6e6; display: flex; justify-content: flex-end; align-items: center; padding-right: 1px; }
.grip { width: 9px; height: 15px; background: repeating-conic-gradient(#b8b8b8 0 25%, #f4f4f4 0 100%) 0 0 / 2px 2px; }
.grip.wide { width: 25px; height: 9px; margin: 2px 0 3px 3px; }
.sideicons { display: flex; flex-direction: column; align-items: center; gap: 4px; padding-right: 1px; }
.sideicons hr { width: 28px; height: 1px; border: 0; background: #c4c4c4; margin: -1px 0 -2px; }
.center { width: 1873px; display: flex; flex-direction: column; }
.viewport { position: relative; height: 789px; border-bottom: 1px solid #777; }
.viewport::after {
  content: ""; position: absolute; inset: 0; box-shadow: inset 1px 2px 3px rgba(0,0,0,.45), inset -1px -1px 2px rgba(0,0,0,.2);
  border-top: 1px solid #555; border-right: 1px solid #777;
}
.findbar {
  position: absolute; z-index: 2; left: 1562px; top: 2px; width: 309px; height: 32px; display: flex; align-items: center;
  background: #f5f5f5; border-radius: 3px; box-shadow: 0 1px 4px rgba(0,0,0,.55); padding-left: 8px; gap: 9px;
}
.findbar > .i12:first-child { margin-right: -4px; }
.findinput { width: 192px; height: 24px; display: flex; align-items: center; background: #fff; border: 1px solid #aaa; border-radius: 2px; padding: 0 2px 0 3px; margin-right: -4px; color: #000; letter-spacing: -.4px; }
.findinput span { flex: 1; }
.findinput em { color: #777; margin-right: 3px; }
.redx { width: 10px; height: 10px; color: #d43a3a; margin-right: 7px; }
.dots { margin-left: 2px; }
.fx { width: 8px; height: 8px; margin-left: 3px; overflow: visible; color: #222; }
.hscroll { height: 15px; display: flex; align-items: center; justify-content: space-between; background: #efefef; padding: 0 1px; }
.hthumb { width: 87px; height: 5px; background: #808080; border-radius: 3px; margin-left: 75px; }
.vscroll { width: 15px; background: #efefef; overflow: hidden; }

/* status bar */
.status { height: 31px; display: flex; background: #f4f4f4; align-items: center; }
.st-left, .st-mid, .st-right { display: flex; align-items: center; height: 31px; flex: none; }
.st-left { width: 798px; margin-left: 32px; }
.st-mid { width: 641px; }
.gripcol { width: 11px; height: 28px; display: flex; flex-direction: column; align-items: center; gap: 2px; padding-top: 2px; }
.opt { width: 52px; margin-left: 3px; }
.st-left > .i12 { margin: 0 1px 0 3px; }
.st-left .i24 { margin-left: 2px; overflow: visible; }
.st-left .i18 { margin-left: 2px; }
.wh { width: 76px; margin-left: 1px; padding-top: 2px; white-space: nowrap; letter-spacing: -.3px; color: #222; }
.st-left .xyi { margin-left: 3px; }
.xy { margin-left: 1px; padding-top: 2px; }
.st-mid { gap: 4px; }
.st-mid .gripcol { margin-right: -3px; }
.pagebox {
  width: 96px; height: 23px; border: 1px solid #c4c4c4; border-radius: 2px; background: #fbfbfb; margin: 0 -1px;
  display: flex; align-items: center; justify-content: flex-end; padding-right: 3px; color: #665;
}
.pagebox i { width: 1px; height: 17px; background: #777; transform: rotate(16deg); margin: 0 3px 0 4px; }
.pagebox sup { font-size: 12px; line-height: 13px; margin-bottom: 4px; }
.st-mid .vsep { margin: 0 -1px 0 -1px; }
.combo.small + .vsep { margin-right: 3px; }
.gripcol.g2 { margin-left: 4px; }
.pi { width: 18px; height: 24px; }
.pi.one { margin-left: 5px; }
.psel { width: 28px; height: 28px; margin-left: 5px; background: #e4cf9f; border: 1px solid #c3b27f; display: flex; align-items: center; justify-content: center; }
.pw { width: 26px; height: 24px; margin-left: 1px; }
.pw.p4 { margin-left: 2px; }
.gripcol.g3 { margin-left: 1px; }
.more { width: 11px; height: 31px; background: #e8e8e8; margin-left: auto; }
.st-right { width: 449px; }
```
